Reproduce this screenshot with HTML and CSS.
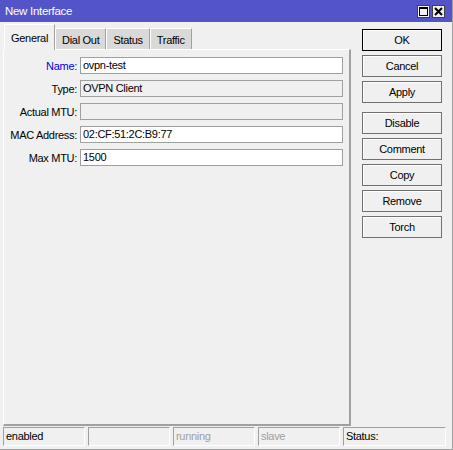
FILE: index.html
```html
<!DOCTYPE html>
<html lang="en">
<head>
    <meta charset="UTF-8">
    <title>New Interface</title>
    <link rel="stylesheet" href="styles.css">
</head>
<body>
    <div class="window">
        <div class="titlebar">
            <span class="title">New Interface</span>
            <div class="title-buttons">
                <span class="tbtn">
                    <svg width="11" height="11" viewBox="0 0 11 11"><rect x="1.5" y="1.5" width="8" height="8" fill="none" stroke="#000" stroke-width="1"/><rect x="1" y="1" width="9" height="2" fill="#000"/></svg>
                </span>
                <span class="tbtn">
                    <svg width="11" height="11" viewBox="0 0 11 11"><path d="M2 2 L9 9 M9 2 L2 9" stroke="#000" stroke-width="2"/></svg>
                </span>
            </div>
        </div>

        <div class="main">
            <div class="left">
                <div class="tabs">
                    <div class="tab active">General</div>
                    <div class="tab">Dial Out</div>
                    <div class="tab">Status</div>
                    <div class="tab">Traffic</div>
                </div>
                <div class="panel">
                    <div class="row">
                        <label class="lbl blue">Name:</label>
                        <div class="field">ovpn-test</div>
                    </div>
                    <div class="row">
                        <label class="lbl">Type:</label>
                        <div class="field ro">OVPN Client</div>
                    </div>
                    <div class="row">
                        <label class="lbl">Actual MTU:</label>
                        <div class="field ro"></div>
                    </div>
                    <div class="row">
                        <label class="lbl">MAC Address:</label>
                        <div class="field">02:CF:51:2C:B9:77</div>
                    </div>
                    <div class="row">
                        <label class="lbl">Max MTU:</label>
                        <div class="field">1500</div>
                    </div>
                </div>
            </div>

            <div class="right">
                <button class="btn default">OK</button>
                <button class="btn">Cancel</button>
                <button class="btn">Apply</button>
                <button class="btn spaced">Disable</button>
                <button class="btn">Comment</button>
                <button class="btn">Copy</button>
                <button class="btn">Remove</button>
                <button class="btn">Torch</button>
            </div>
        </div>

        <div class="statusbar">
            <div class="cell">enabled</div>
            <div class="cell"></div>
            <div class="cell dim">running</div>
            <div class="cell dim">slave</div>
            <div class="cell wide">Status:</div>
        </div>
    </div>
</body>
</html>
```

FILE: styles.css
```css
body {
    margin: 0;
    font-family: 'Liberation Sans', Arial, sans-serif;
    font-size: 11px;
    letter-spacing: -0.3px;
    color: #000;
    background: #f0f0f0;
}

.window {
    width: 453px;
    height: 450px;
    box-sizing: border-box;
    background: #f0f0f0;
    border-right: 1px solid #a0a0a0;
    border-bottom: 1px solid #a0a0a0;
    display: flex;
    flex-direction: column;
}

.titlebar {
    height: 22px;
    background: #5454c9;
    display: flex;
    align-items: center;
    justify-content: space-between;
    padding: 0 7px 0 5px;
    flex-shrink: 0;
}

.title {
    color: #fff;
    font-size: 11.5px;
}

.title-buttons {
    display: flex;
    gap: 2px;
}

.tbtn {
    width: 13px;
    height: 13px;
    box-sizing: border-box;
    background: #f0f0f0;
    border: 1px solid #404040;
    display: flex;
    align-items: center;
    justify-content: center;
}

.main {
    display: flex;
    flex: 1;
}

.left {
    width: 348px;
    padding-left: 3px;
    padding-top: 2px;
    display: flex;
    flex-direction: column;
}

.tabs {
    display: flex;
    align-items: flex-end;
    padding-left: 1px;
    height: 25px;
}

.tab {
    height: 21px;
    box-sizing: border-box;
    padding: 3px 6px 0 6px;
    background: #d9d9d9;
    border-top: 1px solid #ffffff;
    border-left: 1px solid #ffffff;
    border-right: 1px solid #a0a0a0;
    font-size: 11px;
    line-height: 16px;
}

.tab.active {
    height: 26px;
    background: #f0f0f0;
    padding: 5px 6px 0 6px;
    margin-bottom: -1px;
    position: relative;
    z-index: 1;
}

.panel {
    flex: 1;
    border-top: 1px solid #ffffff;
    border-left: 1px solid #ffffff;
    border-right: 2px solid #a0a0a0;
    border-bottom: 2px solid #a0a0a0;
    padding-top: 7px;
    display: flex;
    flex-direction: column;
    gap: 6px;
}

.row {
    display: flex;
    align-items: center;
    height: 17px;
}

.lbl {
    width: 73px;
    text-align: right;
    padding-right: 3px;
    white-space: nowrap;
}

.lbl.blue {
    color: #0000ee;
}

.field {
    width: 263px;
    height: 17px;
    box-sizing: border-box;
    border: 1px solid #a0a0a0;
    background: #fff;
    padding-left: 2px;
    line-height: 15px;
}

.field.ro {
    background: #f0f0f0;
}

.right {
    padding-left: 11px;
    padding-top: 7px;
    display: flex;
    flex-direction: column;
    gap: 4px;
}

.btn {
    width: 80px;
    height: 22px;
    border: 1px solid #707070;
    box-shadow: inset 1px 1px 0 #ffffff;
    background: #f0f0f0;
    font-family: 'Liberation Sans', Arial, sans-serif;
    font-size: 11px;
    letter-spacing: -0.3px;
    padding: 0;
    color: #000;
}

.btn.default {
    border: 1px solid #000;
}

.btn.spaced {
    margin-top: 5px;
}

.statusbar {
    display: flex;
    gap: 3px;
    padding: 1px 0 3px 3px;
    flex-shrink: 0;
}

.cell {
    width: 82px;
    height: 19px;
    box-sizing: border-box;
    border-top: 1px solid #a0a0a0;
    border-left: 1px solid #a0a0a0;
    border-right: 1px solid #ffffff;
    border-bottom: 1px solid #ffffff;
    padding-left: 2px;
    line-height: 17px;
}

.cell.dim {
    color: #a0a0a0;
}

.cell.wide {
    width: 103px;
}
```
